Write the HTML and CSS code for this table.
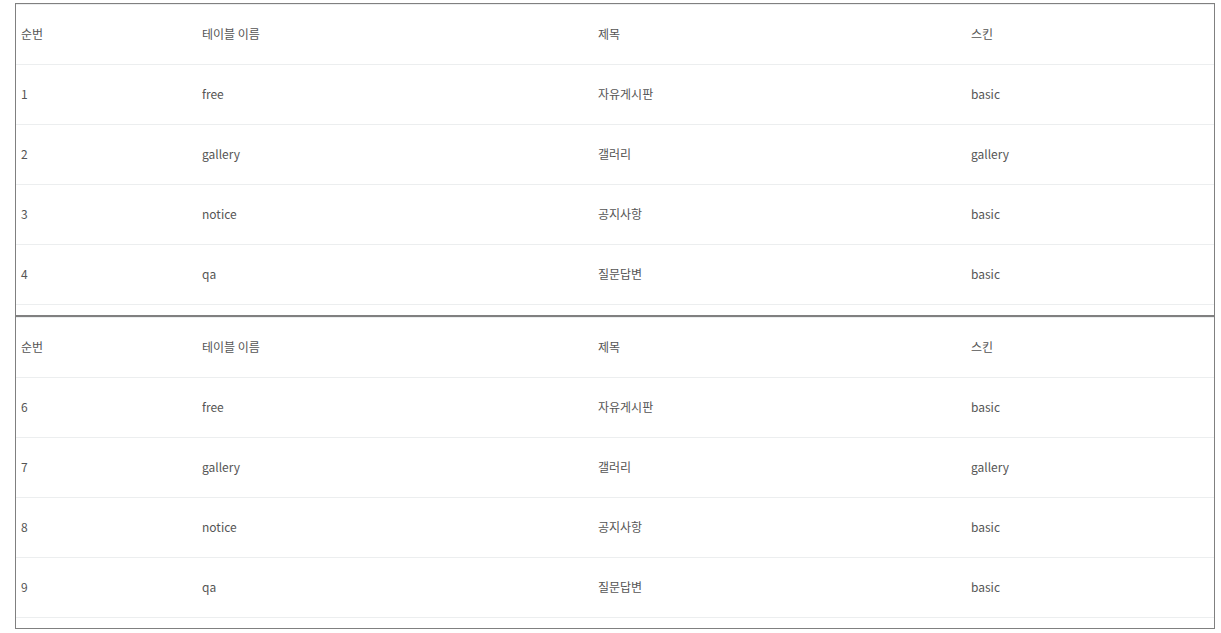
FILE: index.html
```html
<!DOCTYPE html>
<html>
  <head>
    <meta charset="utf-8">
    <title>게시판 목록</title>
    <link rel="stylesheet" href="styles.css">
  </head>
  <body>
    <div class="page">
      <div class="board-box">
        <table class="board-list">
          <colgroup>
            <col class="col-num">
            <col class="col-table">
            <col class="col-title">
            <col class="col-skin">
          </colgroup>
          <tr>
            <th>순번</th>
            <th>테이블 이름</th>
            <th>제목</th>
            <th>스킨</th>
          </tr>
          <tr>
            <td>1</td>
            <td>free</td>
            <td>자유게시판</td>
            <td>basic</td>
          </tr>
          <tr>
            <td>2</td>
            <td>gallery</td>
            <td>갤러리</td>
            <td>gallery</td>
          </tr>
          <tr>
            <td>3</td>
            <td>notice</td>
            <td>공지사항</td>
            <td>basic</td>
          </tr>
          <tr class="last">
            <td>4</td>
            <td>qa</td>
            <td>질문답변</td>
            <td>basic</td>
          </tr>
        </table>
      </div>

      <div class="board-box">
        <table class="board-list">
          <colgroup>
            <col class="col-num">
            <col class="col-table">
            <col class="col-title">
            <col class="col-skin">
          </colgroup>
          <tr>
            <th>순번</th>
            <th>테이블 이름</th>
            <th>제목</th>
            <th>스킨</th>
          </tr>
          <tr>
            <td>6</td>
            <td>free</td>
            <td>자유게시판</td>
            <td>basic</td>
          </tr>
          <tr>
            <td>7</td>
            <td>gallery</td>
            <td>갤러리</td>
            <td>gallery</td>
          </tr>
          <tr>
            <td>8</td>
            <td>notice</td>
            <td>공지사항</td>
            <td>basic</td>
          </tr>
          <tr class="last">
            <td>9</td>
            <td>qa</td>
            <td>질문답변</td>
            <td>basic</td>
          </tr>
        </table>
      </div>
    </div>
  </body>
</html>
```

FILE: styles.css
```css
* {
  box-sizing: border-box;
}

body {
  margin: 0;
  padding: 0;
  font-family: "Noto Sans CJK KR", "Noto Sans", sans-serif;
  font-size: 12px;
  color: #555;
  background-color: #fff;
}

.page {
  padding: 3px 6px 0 15px;
}

.board-box {
  border: 1px solid #808080;
  padding-bottom: 10px;
}

.board-list {
  width: 100%;
  table-layout: fixed;
  border-collapse: separate;
  border-spacing: 0;
}

.col-num {
  width: 181px;
}

.col-table {
  width: 396px;
}

.col-title {
  width: 373px;
}

.board-list th,
.board-list td {
  padding: 20px 5px 22px;
  line-height: 17px;
  text-align: left;
  font-weight: normal;
  border-top: 1px solid #eceeef;
  white-space: nowrap;
}

.board-list .last td {
  border-bottom: 1px solid #eceeef;
}
```
